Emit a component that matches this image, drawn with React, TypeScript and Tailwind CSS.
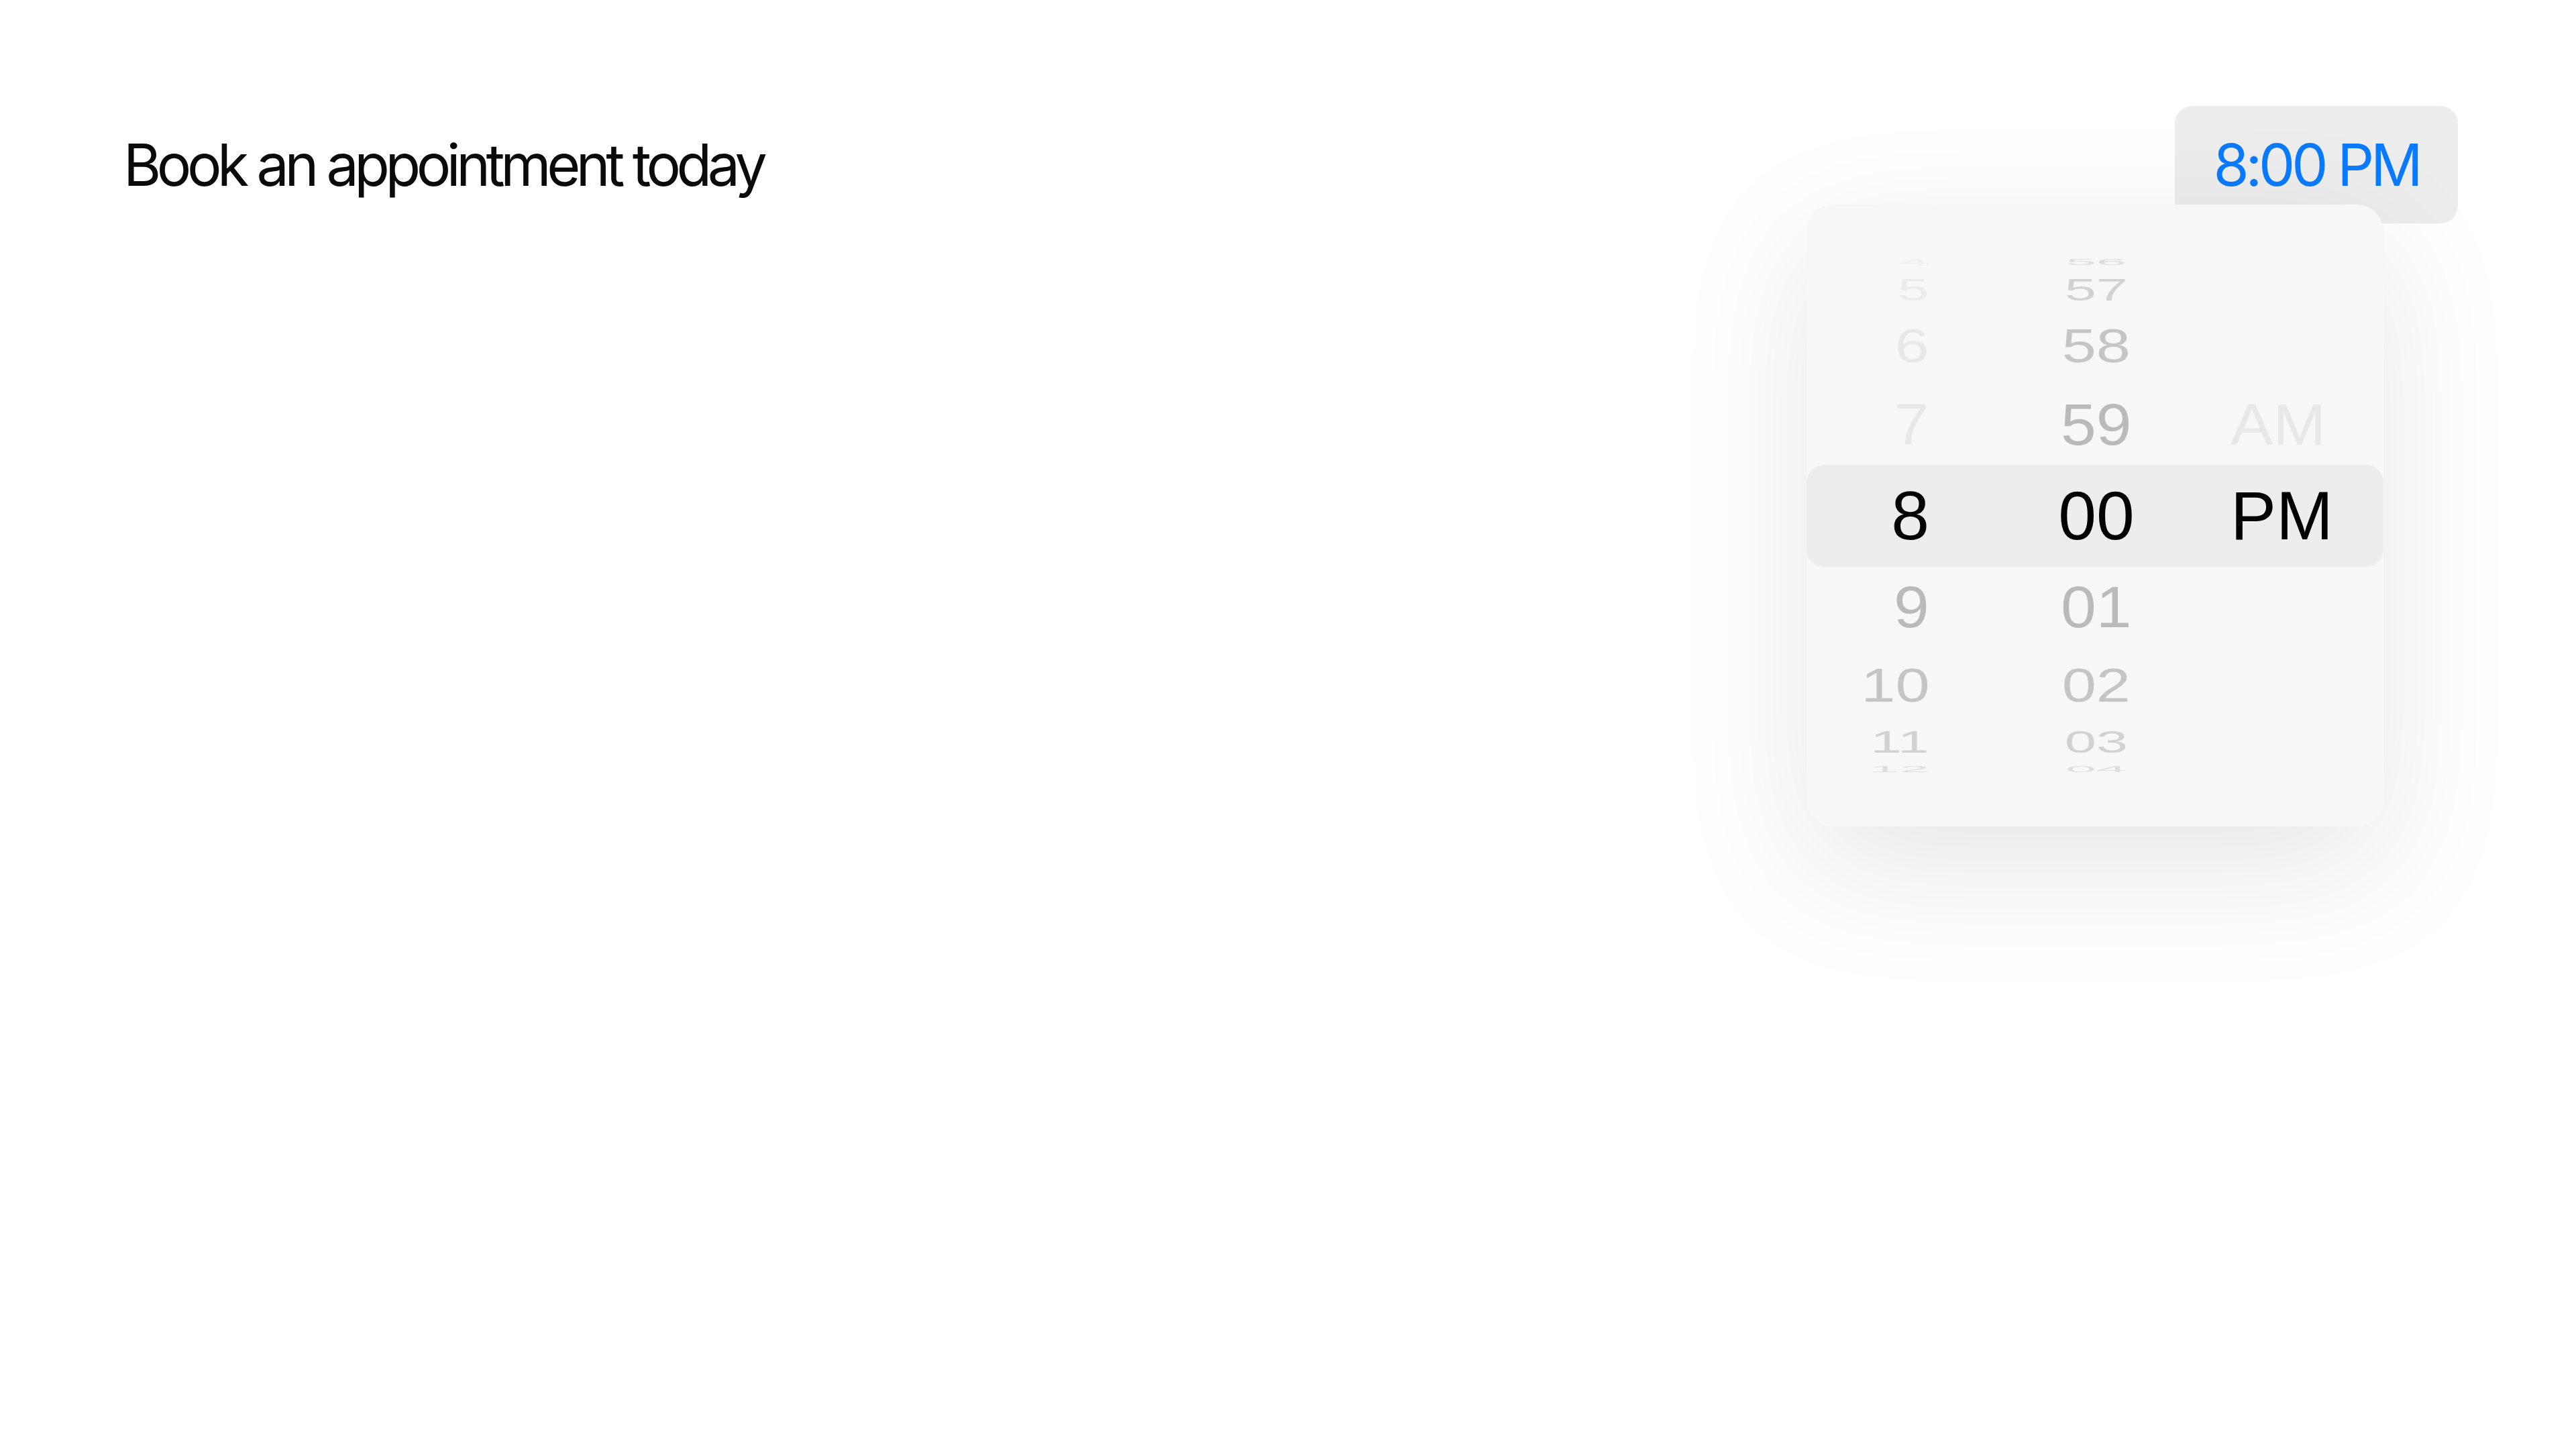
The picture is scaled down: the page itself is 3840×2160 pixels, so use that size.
import React from "react"

// distance (px) of each row's centre from the selected row, like an iOS wheel
const OFFSETS = [0, 136, 253, 337, 378]
const SCALE_X = [1, 0.93, 0.9, 0.83, 0.8]
const SCALE_Y = [1, 0.85, 0.69, 0.45, 0.12]
const BAND = 152

const ENABLED = ["text-black", "text-[#bababa]", "text-[#c5c5c5]", "text-[#d2d2d2]", "text-[#dedede]"]
const DISABLED = ["text-black", "text-[#e8e8e8]", "text-[#e8e8e8]", "text-[#ebebeb]", "text-[#efefef]"]

function rowHeights() {
  const heights = [BAND]
  let edge = BAND / 2
  for (let k = 1; k < OFFSETS.length; k++) {
    const h = 2 * (OFFSETS[k] - edge)
    heights.push(h)
    edge += h
  }
  return heights
}

function Cell({
  text,
  dist,
  disabled,
  origin,
}: {
  text: string
  dist: number
  disabled?: boolean
  origin: string
}) {
  if (!text) return null
  const color = disabled ? DISABLED[dist] : ENABLED[dist]
  return (
    <span
      className={`block leading-none whitespace-nowrap ${origin} ${color}`}
      style={{ transform: `scale(${SCALE_X[dist]}, ${SCALE_Y[dist]})` }}
    >
      {text}
    </span>
  )
}

function TimeWheel() {
  const heights = rowHeights()
  const rows = []
  for (let k = -4; k <= 4; k++) {
    const dist = Math.abs(k)
    const hour = 8 + k
    const minute = String((60 + k) % 60).padStart(2, "0")
    const period = k === -1 ? "AM" : k === 0 ? "PM" : ""
    rows.push(
      <div
        key={k}
        className={`flex items-center ${k === 0 ? "rounded-[26px] bg-[#ededed]" : ""}`}
        style={{ height: heights[dist] }}
      >
        <div className="flex w-[183px] justify-end">
          <Cell text={String(hour)} dist={dist} disabled={k < 0} origin="origin-right" />
        </div>
        <div className="ml-[149px] flex w-[200px] justify-center">
          <Cell text={minute} dist={dist} origin="origin-center" />
        </div>
        <div className="ml-[100px] flex justify-start">
          <Cell text={period} dist={dist} disabled={k === -1} origin="origin-left" />
        </div>
      </div>
    )
  }
  return (
    <div className="flex h-full flex-col justify-center font-['Liberation_Sans',Arial,sans-serif] text-[102px]">
      {rows}
    </div>
  )
}

export default function App() {
  return (
    <div className="h-[2160px] w-[3840px] overflow-hidden bg-white">
      <div className="flex items-center justify-between pl-[184px] pr-[176px] pt-[158px] font-['Inter',sans-serif]">
        <h1 className="text-[86px] font-normal leading-none tracking-[-0.075em] text-[#0a0a0a]">
          Book an appointment today
        </h1>
        <div className="relative">
          <button className="flex h-[175px] w-[422px] items-center justify-center rounded-[26px] bg-[#ededed] text-[86px] leading-none tracking-[-0.06em] text-[#0a7aff]">
            8:00 PM
          </button>
          <div className="absolute right-[111px] top-[147px] z-20 h-[927px] w-[860px] rounded-[40px] bg-[#f7f7f7] shadow-[0_60px_200px_rgba(0,0,0,0.10)]">
            <TimeWheel />
          </div>
        </div>
      </div>
    </div>
  )
}
